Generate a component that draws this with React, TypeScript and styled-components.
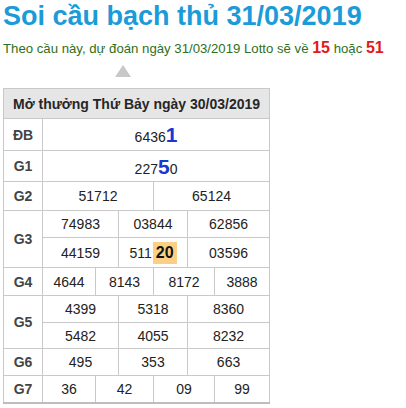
import * as React from 'react';
import styled, { createGlobalStyle } from 'styled-components';

const GlobalStyle = createGlobalStyle`
	body {
		margin: 0;
		background: #fff;
		font-family: "Liberation Sans", Arial, sans-serif;
	}
`;

const Page = styled.div`
	padding: 0 3px;
`;

const Title = styled.h1`
	margin: 0;
	font-size: 27px;
	line-height: 32px;
	font-weight: 700;
	color: #1b9bd8;
	white-space: nowrap;
`;

const Predict = styled.div`
	margin-top: 6px;
	font-size: 13.2px;
	line-height: 20px;
	color: #2f6f22;
	white-space: nowrap;
`;

const Lotto = styled.b`
	font-size: 16px;
	color: #e01b1b;
`;

const Arrow = styled.div`
	margin: 6px 0 0 112px;
	width: 0;
	height: 0;
	border-left: 8px solid transparent;
	border-right: 8px solid transparent;
	border-bottom: 12px solid #c8c8c8;
`;

const Table = styled.table`
	margin-top: 11px;
	width: 266px;
	table-layout: fixed;
	border-collapse: collapse;
	border: 1px solid #c9c9c9;
	border-bottom: 2px solid #bdbdbd;
	color: #222;
	font-size: 14px;
`;

const Head = styled.th`
	height: 29px;
	padding: 0;
	background: #e6e6e6;
	border: 1px solid #c9c9c9;
	font-size: 14px;
	color: #262626;
	text-align: center;
	white-space: nowrap;
`;

const Tr = styled.tr<{ $h: number }>`
	height: ${(p) => p.$h}px;
`;

const Label = styled.td`
	padding: 0;
	border: 1px solid #c9c9c9;
	font-weight: 700;
	font-size: 14px;
	color: #444;
	text-align: center;
`;

const Cell = styled.td`
	padding: 0;
	border: 1px solid #c9c9c9;
	text-align: center;
	white-space: nowrap;
`;

const Tail = styled.span`
	font-size: 21px;
	font-weight: 700;
	color: #1838d0;
	line-height: 1;
`;

const Hot = styled.b`
	display: inline-block;
	padding: 0 3px;
	margin-left: 1px;
	font-size: 16px;
	line-height: 22px;
	color: #111;
	background: #fbcf84;
`;

// column widths follow the screenshot's uneven splits
const widths = [39, 53, 23, 35, 34, 27, 55];

type Row = { label: string; h: number; cells: [React.ReactNode, number][]; rowSpan?: number; sub?: boolean };

const rows: Row[] = [
	{ label: 'ĐB', h: 32, cells: [[<>6436<Tail>1</Tail></>, 6]] },
	{ label: 'G1', h: 31, cells: [[<>227<Tail>5</Tail>0</>, 6]] },
	{ label: 'G2', h: 29, cells: [['51712', 3], ['65124', 3]] },
	{ label: 'G3', h: 27, rowSpan: 2, cells: [['74983', 2], ['03844', 2], ['62856', 2]] },
	{ label: '', h: 30, sub: true, cells: [['44159', 2], [<>511<Hot>20</Hot></>, 2], ['03596', 2]] },
	{ label: 'G4', h: 28, cells: [['4644', 1], ['8143', 2], ['8172', 2], ['3888', 1]] },
	{ label: 'G5', h: 27, rowSpan: 2, cells: [['4399', 2], ['5318', 2], ['8360', 2]] },
	{ label: '', h: 26, sub: true, cells: [['5482', 2], ['4055', 2], ['8232', 2]] },
	{ label: 'G6', h: 27, cells: [['495', 2], ['353', 2], ['663', 2]] },
	{ label: 'G7', h: 27, cells: [['36', 1], ['42', 2], ['09', 2], ['99', 1]] },
];

const App = () => (
	<Page>
		<GlobalStyle />
		<Title>Soi cầu bạch thủ 31/03/2019</Title>
		<Predict>
			Theo cầu này, dự đoán ngày 31/03/2019 Lotto sẽ về <Lotto>15</Lotto> hoặc <Lotto>51</Lotto>
		</Predict>
		<Arrow />
		<Table>
			<colgroup>
				{widths.map((w, i) => (
					<col key={i} style={{ width: w }} />
				))}
			</colgroup>
			<thead>
				<tr>
					<Head colSpan={7}>Mở thưởng Thứ Bảy ngày 30/03/2019</Head>
				</tr>
			</thead>
			<tbody>
				{rows.map((r, i) => (
					<Tr key={i} $h={r.h}>
						{!r.sub && <Label rowSpan={r.rowSpan}>{r.label}</Label>}
						{r.cells.map(([v, span], j) => (
							<Cell key={j} colSpan={span}>
								{v}
							</Cell>
						))}
					</Tr>
				))}
			</tbody>
		</Table>
	</Page>
);

export default App;
